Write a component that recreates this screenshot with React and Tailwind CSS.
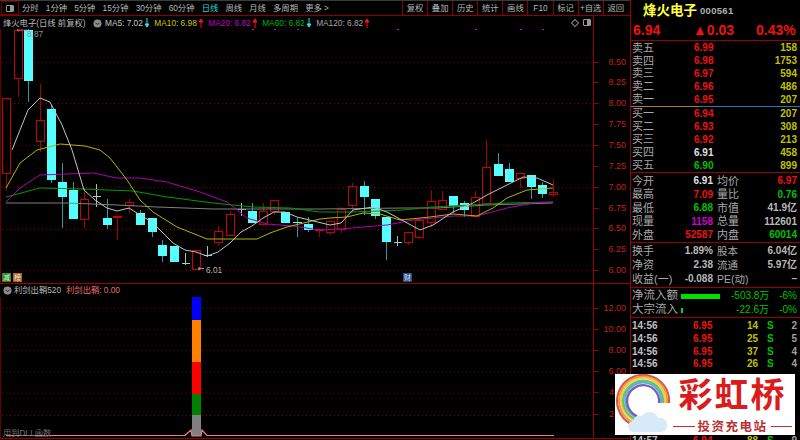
import React from 'react';

const SANS = "font-['Liberation_Sans','Noto_Sans_CJK_SC',sans-serif]";

const periods = ['分时', '1分钟', '5分钟', '15分钟', '30分钟', '60分钟', '日线', '周线', '月线', '多周期', '更多 >'];
const actions = ['复权', '叠加', '历史', '统计', '画线', 'F10', '标记', '+自选', '返回'];

// x, high, body top, body bottom, low, type (r red, c cyan, x cross)
const candles = [
  [6, 98, 98, 173, 190, 'r'], [17.5, 30, 30, 78, 97, 'r'], [28.3, 29, 30, 81, 102, 'c'], [40, 84, 120, 141, 152, 'r'],
  [50.7, 105, 109, 180, 183, 'c'], [62, 163, 182, 197, 228, 'c'], [73, 182, 190, 219, 219, 'c'], [84.3, 188, 199, 219, 228, 'r'],
  [95.7, 184, 196, 196, 207, 'x'], [106.7, 199, 218, 225, 229, 'c'], [117.3, 215, 216, 216, 240, 'r'], [129, 199, 202, 205, 213, 'r'],
  [140, 210, 213, 225, 225, 'c'], [151.7, 218, 218, 232, 237, 'c'], [162, 240, 245, 256, 262, 'c'], [173.7, 246, 246, 262, 262, 'c'],
  [184.7, 253, 263, 263, 265, 'x'], [196, 250, 250, 269, 269, 'r'], [207, 246, 255, 255, 257, 'x'], [218, 226, 231, 242, 246, 'r'],
  [230, 211, 214, 235, 235, 'r'], [240.7, 203, 209, 209, 216, 'x'], [252, 203, 211, 223, 223, 'c'], [263, 203, 211, 224, 224, 'r'],
  [274, 200, 200, 211, 215, 'r'], [285, 212, 212, 223, 223, 'c'], [296.7, 218, 222, 223, 237, 'c'], [307.7, 217, 224, 230, 232, 'c'],
  [319, 229, 229, 230, 237, 'r'], [330, 221, 221, 232, 235, 'r'], [341, 207, 209, 229, 233, 'r'], [352, 183, 186, 205, 212, 'r'],
  [364, 181, 186, 197, 215, 'c'], [375, 199, 199, 216, 219, 'c'], [386, 217, 217, 242, 260, 'c'], [397, 236, 242, 242, 246, 'x'],
  [408, 232, 232, 242, 245, 'r'], [419, 220, 220, 237, 239, 'r'], [431, 190, 201, 222, 227, 'r'], [442, 191, 200, 209, 209, 'r'],
  [453, 196, 196, 206, 213, 'c'], [464, 201, 203, 210, 217, 'c'], [475, 191, 197, 216, 216, 'r'], [486, 140, 167, 203, 203, 'r'],
  [498, 153, 164, 176, 176, 'c'], [509, 163, 169, 182, 182, 'c'], [520, 173, 173, 178, 188, 'r'], [531, 175, 175, 187, 199, 'c'],
  [542, 182, 185, 194, 198, 'c'], [553, 179, 192, 194, 197, 'r'],
];

const maLines = [
  ['#808080', '6,203 67,203 117,205 157,207 213,209 267,209 320,209 403,208 437,208 487,205 553,203'],
  ['#009a00', '6,197 40,188 83,189 133,191 167,197 213,203 253,207 290,208 320,212 353,212 403,210 433,207 470,205 507,203 553,202'],
  ['#b000b0', '6,202 20,188 40,175 67,174 93,173 117,178 140,178 167,182 200,192 227,202 247,218 267,224 293,226 320,230 340,229 387,225 413,220 453,216 477,216 507,208 533,203 553,202'],
  ['#b4b400', '6,188 20,163 37,150 60,144 85,146 100,150 110,158 127,180 140,200 153,212 177,227 207,239 233,239 257,239 270,233 287,227 320,219 330,218 347,217 363,213 380,214 400,220 430,217 453,214 477,216 493,208 507,198 527,190 553,188'],
  ['#c4c4c4', '12,150 28,110 40,98 50,102 62,125 72,150 84,190 95,200 107,208 117,211 129,208 140,215 152,222 162,232 173,243 185,250 196,252 207,256 218,252 230,243 241,232 252,226 263,218 274,212 285,212 297,217 330,225 341,223 353,210 373,207 387,212 420,230 433,225 453,212 473,203 487,195 507,185 523,177 537,178 553,185'],
];

const mainGrid = [62, 103.5, 145.5, 187, 229, 270.5];
const subGrid = [308.5, 329.5, 350.5, 371.5, 393.5, 415.5];
const flags = [252, 274, 297, 397, 475, 520, 542];
const mainAxis = ['8.50', '8.25', '8.00', '7.75', '7.50', '7.25', '7.00', '6.75', '6.50', '6.25', '6.00'];
const subAxis = ['12.00', '10.00', '8.00', '6.00', '4', '2'];

const maItems = [
  { label: 'MA5: 7.02', color: 'text-[#c8c8c8]', up: false },
  { label: 'MA10: 6.98', color: 'text-[#c8c800]', up: true },
  { label: 'MA20: 6.82', color: 'text-[#c000c0]', up: true },
  { label: 'MA60: 6.82', color: 'text-[#00b000]', up: false },
  { label: 'MA120: 6.82', color: 'text-[#a8a8a8]', up: true },
];

const sells = [['卖五', '6.99', '158'], ['卖四', '6.98', '1753'], ['卖三', '6.97', '594'], ['卖二', '6.96', '486'], ['卖一', '6.95', '207']];
const buys = [
  ['买一', '6.94', '207', 'text-[#f01010]'], ['买二', '6.93', '308', 'text-[#f01010]'], ['买三', '6.92', '213', 'text-[#f01010]'],
  ['买四', '6.91', '458', 'text-[#e0e0e0]'], ['买五', '6.90', '899', 'text-[#00c000]'],
];
const stats = [
  ['今开', '6.91', 'text-[#e0e0e0]', '均价', '6.97', 'text-[#f01010]'],
  ['最高', '7.09', 'text-[#f01010]', '量比', '0.76', 'text-[#00c000]'],
  ['最低', '6.88', 'text-[#00c000]', '市值', '41.9亿', 'text-[#b8b8b8]'],
  ['现量', '1158', 'text-[#d000d0]', '总量', '112601', 'text-[#b8b8b8]'],
  ['外盘', '52587', 'text-[#f01010]', '内盘', '60014', 'text-[#00c000]'],
];
const finance = [
  ['换手', '1.89%', '股本', '6.04亿'],
  ['净资', '2.38', '流通', '5.97亿'],
  ['收益(一)', '-0.088', 'PE(动)', '–'],
];
const flows = [
  ['净流入额', 'w-[39px]', '-503.8万', '-6%'],
  ['大宗流入', 'w-[2px]', '-22.6万', '-0%'],
];
const ticks = [
  ['14:56', '6.95', '14', '2'], ['14:56', '6.95', '25', '5'], ['14:56', '6.95', '37', '4'], ['14:56', '6.95', '26', '4'],
];

function Arrow({ up }) {
  const color = up ? '#ff1010' : '#30e0e0';
  return (
    <svg width="6" height="10" viewBox="0 0 6 10" className="shrink-0 ml-[1px]">
      <path d={up ? 'M3 10V1M1 4l2-3 2 3z' : 'M3 0v9M1 6l2 3 2-3z'} stroke={color} fill={color} strokeWidth="1" />
    </svg>
  );
}

function Chevron() {
  return (
    <svg width="9" height="9" viewBox="0 0 9 9" className="shrink-0">
      <circle cx="4.5" cy="4.5" r="4" fill="#8c8c8c" />
      <path d="M2.5 3.7l2 2 2-2" stroke="#222" strokeWidth="1" fill="none" />
    </svg>
  );
}

function PanelIcon() {
  return <div className="w-[8px] h-[7px] rounded-[1px] border border-[#999] bg-[linear-gradient(90deg,#000_50%,#999_50%)]" />;
}

function Candle({ c }) {
  const [x, high, top, bottom, low, type] = c;
  const cx = Math.round(x) + 0.5;
  const left = cx - 4;
  if (type === 'x') {
    return (
      <g stroke="#7ae0e0">
        <line x1={cx} x2={cx} y1={high} y2={low} stroke="#b8b8b8" />
        <line x1={cx - 4} x2={cx + 4} y1={top + 0.5} y2={top + 0.5} />
      </g>
    );
  }
  if (type === 'c') {
    return (
      <g>
        <line x1={cx} x2={cx} y1={high} y2={low} stroke="#2c9a9a" />
        <rect x={left - 0.5} y={top} width="9" height={Math.max(bottom - top, 1)} fill="#55ffff" />
      </g>
    );
  }
  return (
    <g>
      <line x1={cx} x2={cx} y1={high} y2={low} stroke="#a80000" />
      <rect x={left} y={top + 0.5} width="8" height={Math.max(bottom - top, 1)} fill="#000" stroke="#c80000" />
    </g>
  );
}

function MainChart() {
  return (
    <svg width="593" height="254" viewBox="0 29 593 254" className="block">
      <g shapeRendering="crispEdges">
        <line x1="0.5" x2="0.5" y1="29" y2="283" stroke="#6a0000" />
        {mainGrid.map((y) => (
          <line key={y} x1="2" x2="593" y1={y} y2={y} stroke="#8a0000" strokeDasharray="1 3" />
        ))}
        {flags.map((x) => (
          <rect key={x} x={x} y="29" width="1.5" height="1" fill="#d000d0" />
        ))}
        {candles.map((c) => (
          <Candle key={c[0]} c={c} />
        ))}
      </g>
      {maLines.map(([color, points]) => (
        <polyline key={color} points={points} fill="none" stroke={color} strokeWidth="1" strokeLinejoin="round" />
      ))}
      <path d="M198 268.500h6M198 268.500l2-1.500M198 268.500l2 1.500" stroke="#b0b0b0" strokeWidth="0.8" fill="none" />
      <path d="M17 30h10M17 30l2-1.500M17 30l2 1.500" stroke="#ff5080" strokeWidth="0.8" fill="none" />
    </svg>
  );
}

function SubChart() {
  return (
    <svg width="593" height="141" viewBox="0 297 593 141" className="block">
      <g shapeRendering="crispEdges">
        <line x1="0.5" x2="0.5" y1="297" y2="438" stroke="#6a0000" />
        {subGrid.map((y) => (
          <line key={y} x1="2" x2="593" y1={y} y2={y} stroke="#8a0000" strokeDasharray="1 3" />
        ))}
        <rect x="192" y="297" width="9" height="23" fill="#0000ff" />
        <rect x="192" y="320" width="9" height="42" fill="#ff8000" />
        <rect x="192" y="362" width="9" height="32" fill="#ff0000" />
        <rect x="192" y="394" width="9" height="21" fill="#008000" />
        <rect x="192" y="415" width="9" height="21" fill="#808080" />
      </g>
      <polyline points="6,435.500 185,435.500 191,430 192,436 201,436 202,430 207,435.500 554,435.500" fill="none" stroke="#f08080" strokeWidth="1.200" />
    </svg>
  );
}

function Axis({ labels, step, top }) {
  return (
    <div className="w-[37px] border-l border-[#9a0000] flex flex-col" style={{ paddingTop: top }}>
      {labels.map((label) => (
        <div key={label} className="flex items-center justify-between pr-[4px]" style={{ height: step }}>
          <span className="w-[5px] h-px bg-[#9a0000]" />
          {label.length === 1 ? (
            <span className="w-[17px] text-[9px] leading-none text-[#c02020]">{label}</span>
          ) : (
            <span className="text-[9px] leading-none text-[#c02020]">{label}</span>
          )}
        </div>
      ))}
    </div>
  );
}

function Logo() {
  return (
    <div className="absolute left-[615px] top-[374px] w-[180px] h-[61px] bg-white flex">
      <svg width="58" height="61" viewBox="615 374 58 61" className="shrink-0">
        <g fill="none" strokeWidth="2.200">
          <path d="M631 424A26 26 0 1 1 669 403" stroke="#d9534f" />
          <path d="M632 422A24 24 0 1 1 667 403" stroke="#ee9a3a" />
          <path d="M634 420A22 22 0 1 1 665 403" stroke="#e9cf4c" />
          <path d="M635 419A20 20 0 1 1 663 403" stroke="#7dbb57" />
          <path d="M636 417A18 18 0 1 1 661 403" stroke="#54b4dc" />
          <path d="M637 416A16 16 0 1 1 659 403" stroke="#7a5bb0" />
        </g>
        <path d="M634 432a5.500 5.500 0 0 1-1-11 7 7 0 0 1 9-5 9 9 0 0 1 16 2 7 7 0 0 1 4 14z" fill="#d6eaf8" />
      </svg>
      <div className="flex-1 flex flex-col items-center pr-[3px]">
        <span className="text-[34px] leading-[38px] font-bold text-[#d91c1c] tracking-[2px] font-['Noto_Sans_CJK_SC',sans-serif]">彩虹桥</span>
        <div className="mt-[8px] flex items-center gap-[3px] self-stretch">
          <span className="flex-1 h-px bg-[#c03030]" />
          <span className="text-[12.500px] leading-[12px] font-bold text-[#b83030] tracking-[1.500px] font-['Noto_Sans_CJK_SC',sans-serif]">投资充电站</span>
          <span className="flex-1 h-px bg-[#c03030]" />
        </div>
      </div>
    </div>
  );
}

export default function App() {
  return (
    <div className={`relative w-[800px] h-[440px] bg-black flex overflow-hidden text-[#b8b8b8] ${SANS}`}>
      <div className="w-[630px] shrink-0 flex flex-col">
        {/* toolbar */}
        <div className="h-[16px] shrink-0 flex items-center border-t border-t-[#3a3a3a] border-b border-b-[#8a0000] text-[8.300px] leading-none">
          <div className="w-[18px] h-[14px] ml-[1px] mr-[3px] border border-[#7a0000] flex items-center justify-center">
            <PanelIcon />
          </div>
          <div className="flex gap-[7.200px] w-[380px]">
            {periods.map((p) => (
              <span key={p} className={p === '日线' ? 'text-[#30d0d0]' : ''}>{p}</span>
            ))}
          </div>
          <div className="flex h-full">
            {actions.map((a) => (
              <span key={a} className="w-[25.100px] flex items-center justify-center border-l border-[#8a0000]">{a}</span>
            ))}
          </div>
        </div>

        {/* price pane */}
        <div className="h-[268px] shrink-0 flex border-b border-[#9a0000]">
          <div className="relative w-[593px] shrink-0">
            <div className="h-[13px] flex items-center pl-[3px] pt-[1px] text-[8.300px] leading-none">
              <span className="w-[90px]">烽火电子(日线 前复权)</span>
              <Chevron />
              <div className="flex ml-[3px] gap-[4.500px]">
                {maItems.map((m) => (
                  <div key={m.label} className={`flex items-center ${m.color}`}>
                    <span>{m.label}</span>
                    <Arrow up={m.up} />
                  </div>
                ))}
              </div>
              <div className="absolute right-[2px] top-[3px] flex items-center gap-[5px]">
                <span className="w-[6px] h-[6px] rotate-45 border border-[#888]" />
                <PanelIcon />
              </div>
            </div>
            <MainChart />
            <span className="absolute left-[27px] top-[14px] text-[8.300px] leading-none text-[#909090]">8.87</span>
            <span className="absolute left-[206px] top-[250px] text-[8.300px] leading-none text-[#b0b0b0]">6.01</span>
            <span className="absolute left-[2px] top-[257px] w-[9px] h-[9px] bg-[#2f8a2f] text-[7px] leading-[9px] text-center text-[#d8f0d8]">减</span>
            <span className="absolute left-[13px] top-[257px] w-[9px] h-[9px] bg-[#a8682a] text-[7px] leading-[9px] text-center text-[#f4e0c8]">榜</span>
            <span className="absolute left-[403px] top-[257px] w-[9px] h-[9px] bg-[#2a5080] text-[7px] leading-[9px] text-center text-[#d8e8f8]">财</span>
          </div>
          <Axis labels={mainAxis} step={20.87} top={35.6} />
        </div>

        {/* indicator pane */}
        <div className="h-[155px] shrink-0 flex border-b border-[#9a0000]">
          <div className="relative w-[593px] shrink-0">
            <div className="h-[13px] flex items-center gap-[5px] pl-[3px] text-[8.300px] leading-none">
              <div className="flex items-center gap-[1px]">
                <Chevron />
                <span className="ml-[1px]">利剑出鞘520</span>
              </div>
              <span className="text-[#e07070]">利剑出鞘: 0.00</span>
            </div>
            <SubChart />
            <span className="absolute left-[3px] bottom-[1px] text-[8.300px] leading-none text-[#707070]">用到DLL函数</span>
          </div>
          <Axis labels={subAxis} step={21.1} top={14} />
        </div>
      </div>

      {/* quote panel */}
      <div className="flex-1 border-l border-[#9a0000] flex flex-col font-bold">
        <div className="h-[20px] shrink-0 flex items-center pl-[12px] gap-[3px] pt-[1px]">
          <span className="text-[13.500px] leading-none text-[#ffff40]">烽火电子</span>
          <span className="text-[9.500px] leading-none text-[#b0b0b0] tracking-[0.300px]">000561</span>
        </div>
        <div className="h-[21px] shrink-0 flex items-center px-[2px] pb-[1px] text-[14px] leading-none text-[#f01010] border-b border-[#9a0000]">
          <span className="w-[60px]">6.94</span>
          <span className="w-[63px]">▲0.03</span>
          <span>0.43%</span>
        </div>

        <div className="h-[65px] shrink-0 pt-[1px] pl-[1px] pr-[3px]">
          {sells.map(([label, price, volume]) => (
            <div key={label} className="h-[12.800px] flex items-center">
              <span className="w-[62px] text-[11px] leading-none font-normal text-[#a8a8a8]">{label}</span>
              <span className="text-[10px] leading-none text-[#f01010]">{price}</span>
              <span className="flex-1 text-right text-[10px] leading-none text-[#c0c000]">{volume}</span>
            </div>
          ))}
        </div>
        <div className="h-px shrink-0 bg-[linear-gradient(90deg,#b87820_40%,#2878b8_40%)]" />
        <div className="h-[66px] shrink-0 pl-[1px] pr-[3px] border-b border-[#9a0000]">
          {buys.map(([label, price, volume, color]) => (
            <div key={label} className="h-[13px] flex items-center">
              <span className="w-[62px] text-[11px] leading-none font-normal text-[#a8a8a8]">{label}</span>
              <span className={`text-[10px] leading-none ${color}`}>{price}</span>
              <span className="flex-1 text-right text-[10px] leading-none text-[#c0c000]">{volume}</span>
            </div>
          ))}
        </div>

        <div className="h-[70px] shrink-0 pt-[1.500px] pl-[1px] pr-[3px] border-b border-[#9a0000]">
          {stats.map(([l1, v1, c1, l2, v2, c2]) => (
            <div key={l1} className="h-[13.500px] flex items-center text-[10px] leading-none">
              <span className="w-[24px] text-[11px] font-normal text-[#a8a8a8]">{l1}</span>
              <span className={`w-[57px] text-right ${c1}`}>{v1}</span>
              <span className="ml-[4px] w-[24px] text-[11px] font-normal text-[#a8a8a8]">{l2}</span>
              <span className={`flex-1 text-right ${c2}`}>{v2}</span>
            </div>
          ))}
        </div>

        <div className="h-[45px] shrink-0 pt-[1px] pl-[1px] pr-[3px] border-b border-[#9a0000]">
          {finance.map(([l1, v1, l2, v2]) => (
            <div key={l1} className="h-[14px] flex items-center text-[10px] leading-none text-[#b8b8b8]">
              <span className="w-[36px] text-[11px] font-normal text-[#a8a8a8] whitespace-nowrap">{l1}</span>
              <span className="w-[45px] text-right">{v1}</span>
              <span className="ml-[4px] w-[32px] text-[10.500px] font-normal text-[#a8a8a8]">{l2}</span>
              <span className="flex-1 text-right">{v2}</span>
            </div>
          ))}
        </div>

        <div className="h-[30px] shrink-0 pl-[1px] pr-[3px] pt-[1px] border-b border-[#9a0000]">
          {flows.map(([label, bar, amount, pct]) => (
            <div key={label} className="h-[14px] flex items-center text-[10px] leading-none text-[#00c000]">
              <span className="w-[49px] text-[11.500px] font-normal text-[#a8a8a8] whitespace-nowrap">{label}</span>
              <div className="w-[50px]">
                <div className={`h-[5px] bg-[#00e000] ${bar}`} />
              </div>
              <span className="w-[38px] text-right whitespace-nowrap font-normal">{amount}</span>
              <span className="flex-1 text-right font-normal">{pct}</span>
            </div>
          ))}
        </div>

        <div className="flex-1 overflow-hidden pl-[1px] pr-[3px] pt-[2px]">
          {ticks.map(([time, price, volume, count], i) => (
            <div key={i} className="h-[12.700px] flex items-center text-[10px] leading-none">
              <span className="w-[61px] text-[#c0c0c0]">{time}</span>
              <span className="w-[40px] text-[#f01010]">{price}</span>
              <span className="w-[25px] text-right text-[#c0c000]">{volume}</span>
              <span className="ml-[9px] text-[#00c000]">S</span>
              <span className="flex-1 text-right text-[#a0a0a0]">{count}</span>
            </div>
          ))}
          {/* rows under the logo are not visible */}
          <div className="h-[63.500px]" />
          <div className="h-[12.700px] flex items-center text-[10px] leading-none">
            <span className="w-[61px] text-[#c0c0c0]">14:57</span>
            <span className="w-[40px] text-[#f01010]">6.94</span>
            <span className="w-[25px] text-right text-[#c0c000]">88</span>
            <span className="ml-[9px] text-[#00c000]">S</span>
            <span className="flex-1 text-right text-[#a0a0a0]">9</span>
          </div>
        </div>
      </div>

      <Logo />
    </div>
  );
}
